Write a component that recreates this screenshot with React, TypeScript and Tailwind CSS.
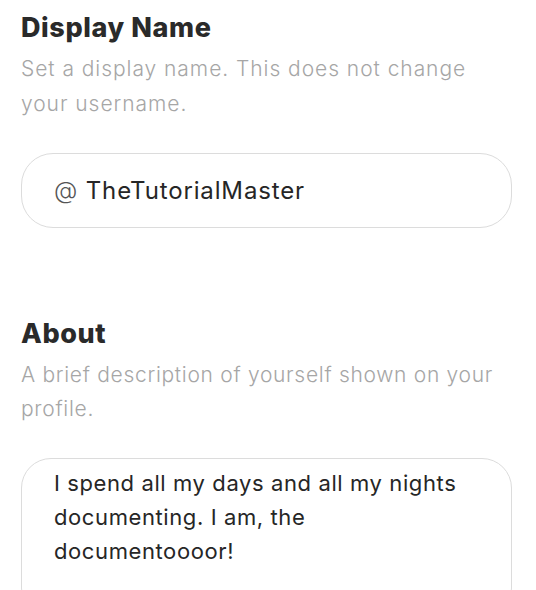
import React from "react";

export default function App() {
  return (
    <div
      className="w-[536px] h-[590px] overflow-hidden bg-white pl-[21px] pr-[24px]"
      style={{ fontFamily: "Inter, 'Noto Sans', sans-serif" }}
    >
      <section className="pt-[10px]">
        <h2 className="text-[27px] font-extrabold leading-[35px] tracking-[0.6px] text-[#2a2a2a]">
          Display Name
        </h2>
        <p className="mt-[6px] text-[21px] font-light leading-[35px] tracking-[0.95px] text-[#a6a6a6]">
          <span className="block whitespace-nowrap">Set a display name. This does not change</span>
          <span className="block">your username.</span>
        </p>
        <div className="mt-[32px] flex h-[75px] items-center rounded-[32px] border border-[#dcdcdc] pl-[32px]">
          <span className="text-[24px] leading-[30px] tracking-[0.85px] text-[#262626]">
            <span className="font-light text-[#555]">@</span> TheTutorialMaster
          </span>
        </div>
      </section>

      <section className="mt-[88px]">
        <h2 className="text-[27px] font-extrabold leading-[35px] tracking-[0.6px] text-[#2a2a2a]">
          About
        </h2>
        <p className="mt-[7px] text-[21px] font-light leading-[34px] tracking-[0.7px] text-[#a6a6a6]">
          <span className="block whitespace-nowrap">A brief description of yourself shown on your</span>
          <span className="block">profile.</span>
        </p>
        <div className="mt-[32px] h-[160px] rounded-[30px] border border-[#dcdcdc] pl-[32px] pr-[24px] pt-[7px]">
          <p className="text-[22px] leading-[34px] tracking-[0.6px] text-[#262626]">
            <span className="block whitespace-nowrap">I spend all my days and all my nights</span>
            <span className="block">documenting. I am, the</span>
            <span className="block">documentoooor!</span>
          </p>
        </div>
      </section>
    </div>
  );
}
